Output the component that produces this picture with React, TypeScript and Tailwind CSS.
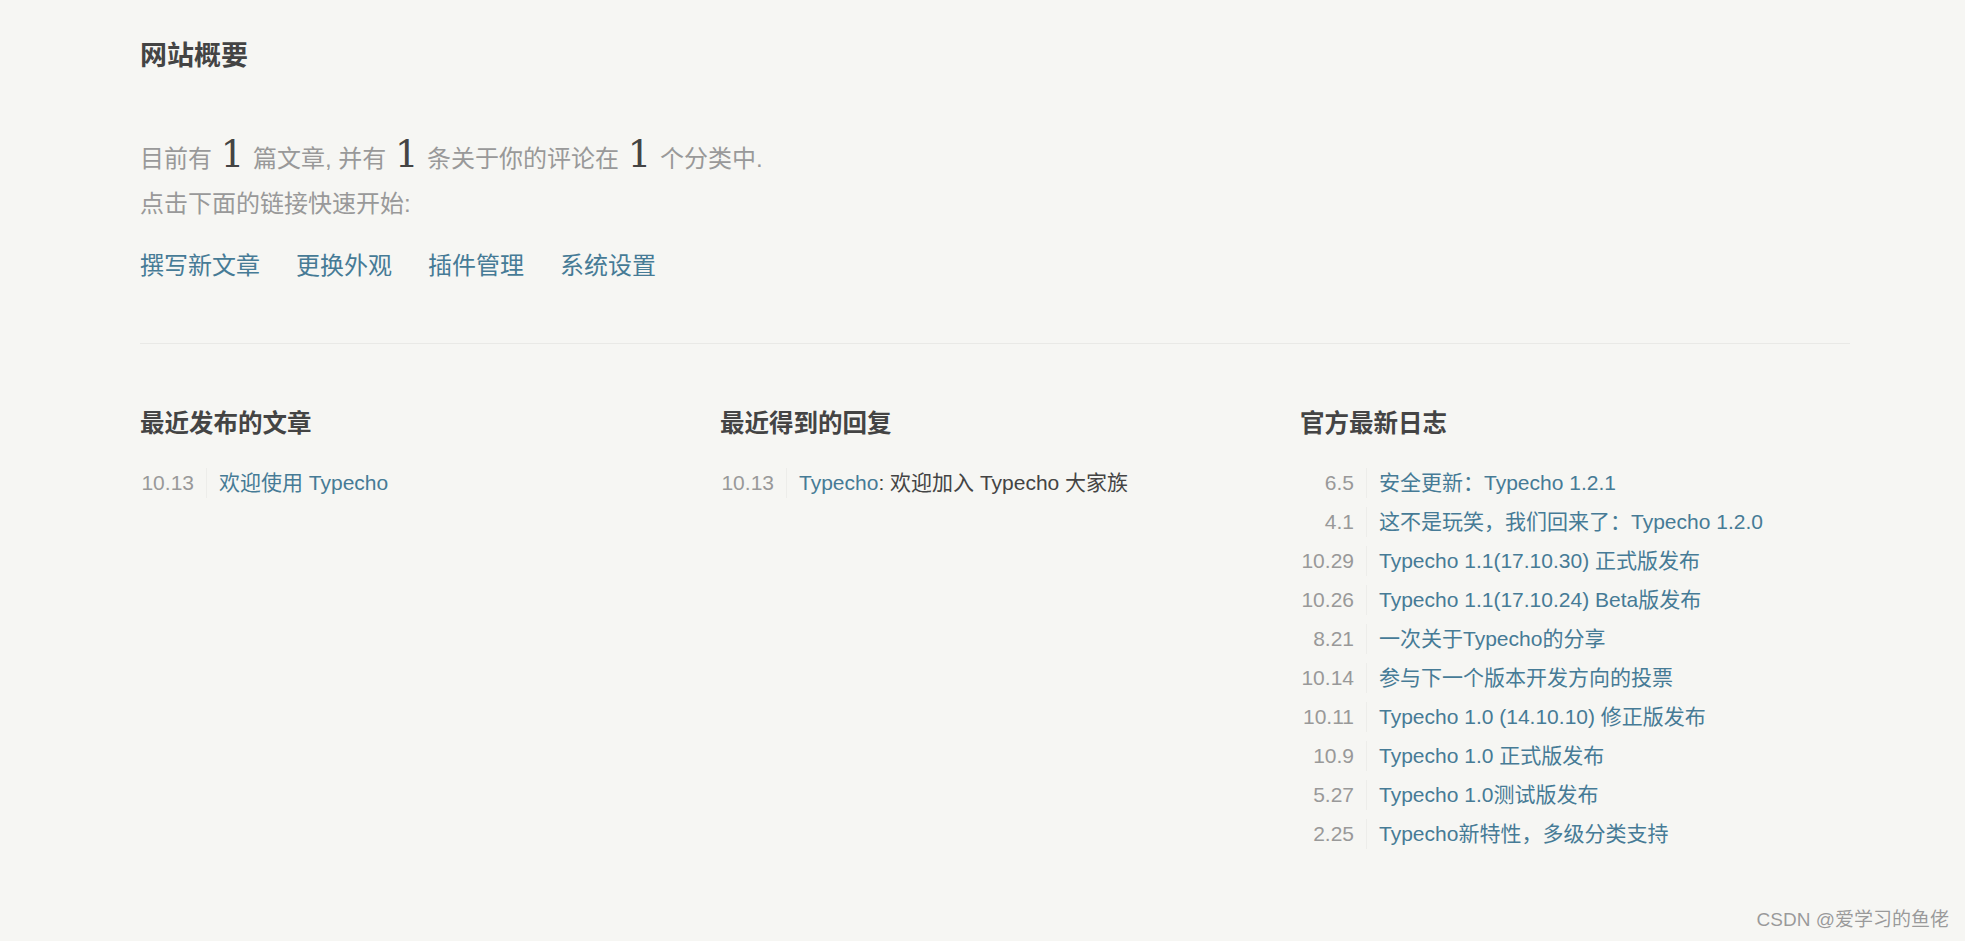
import React from "react";

type Entry = { date: string; title: string };

const posts: Entry[] = [{ date: "10.13", title: "欢迎使用 Typecho" }];

const news: Entry[] = [
  { date: "6.5", title: "安全更新：Typecho 1.2.1" },
  { date: "4.1", title: "这不是玩笑，我们回来了：Typecho 1.2.0" },
  { date: "10.29", title: "Typecho 1.1(17.10.30) 正式版发布" },
  { date: "10.26", title: "Typecho 1.1(17.10.24) Beta版发布" },
  { date: "8.21", title: "一次关于Typecho的分享" },
  { date: "10.14", title: "参与下一个版本开发方向的投票" },
  { date: "10.11", title: "Typecho 1.0 (14.10.10) 修正版发布" },
  { date: "10.9", title: "Typecho 1.0 正式版发布" },
  { date: "5.27", title: "Typecho 1.0测试版发布" },
  { date: "2.25", title: "Typecho新特性，多级分类支持" },
];

const startLinks = ["撰写新文章", "更换外观", "插件管理", "系统设置"];

function DateCell({ date }: { date: string }) {
  return (
    <span className="w-[67px] h-[30px] leading-[30px] pr-[12px] text-right text-[#999] border-r border-[#EDEDEA] shrink-0">
      {date}
    </span>
  );
}

function LatestList({ items }: { items: Entry[] }) {
  return (
    <ul className="mt-[22px]">
      {items.map((item) => (
        <li key={item.date + item.title} className="flex items-center h-[39px]">
          <DateCell date={item.date} />
          <a href="#" className="ml-[12px] text-[#467B96] whitespace-nowrap">
            {item.title}
          </a>
        </li>
      ))}
    </ul>
  );
}

// the big counters use a heavier serif, like Georgia in the original
function Num() {
  return (
    <em className="not-italic mx-[2px] text-[37px] leading-[0px] text-[#444] font-['DejaVu_Serif',serif]">
      1
    </em>
  );
}

export default function App() {
  return (
    <div className="relative min-h-[941px] bg-[#F6F6F3] font-['Liberation_Sans','Noto_Sans_CJK_SC',sans-serif]">
      <div className="pl-[140px] w-[1850px]">
        <h2 className="pt-[38px] text-[27px] leading-[36px] font-bold text-[#444]">
          网站概要
        </h2>

        <div className="text-[24px] text-[#999] border-b border-[#E9E9E6] pb-[57px]">
          <p className="mt-[65px] leading-[40px]">
            目前有 <Num /> 篇文章, 并有 <Num /> 条关于你的评论在 <Num /> 个分类中.
          </p>
          <p className="mt-[5px] leading-[40px]">点击下面的链接快速开始:</p>
          <ul className="flex mt-[22px] leading-[40px]">
            {startLinks.map((l) => (
              <li key={l} className="mr-[36px]">
                <a href="#" className="text-[#467B96]">
                  {l}
                </a>
              </li>
            ))}
          </ul>
        </div>

        <div className="grid grid-cols-3 gap-[30px] mt-[63px] text-[21px]">
          <section>
            <h3 className="text-[24.5px] leading-[34px] font-bold text-[#444]">最近发布的文章</h3>
            <LatestList items={posts} />
          </section>
          <section>
            <h3 className="text-[24.5px] leading-[34px] font-bold text-[#444]">最近得到的回复</h3>
            <ul className="mt-[22px]">
              <li className="flex items-center h-[39px]">
                <DateCell date="10.13" />
                <span className="ml-[12px] text-[#444] whitespace-nowrap">
                  <a href="#" className="text-[#467B96]">
                    Typecho
                  </a>
                  : 欢迎加入 Typecho 大家族
                </span>
              </li>
            </ul>
          </section>
          <section>
            <h3 className="text-[24.5px] leading-[34px] font-bold text-[#444]">官方最新日志</h3>
            <LatestList items={news} />
          </section>
        </div>
      </div>

      <div className="absolute right-[16px] bottom-[7px] text-[19px] text-[#9a9a9a] [text-shadow:0_0_1px_#fff]">
        CSDN @爱学习的鱼佬
      </div>
    </div>
  );
}
